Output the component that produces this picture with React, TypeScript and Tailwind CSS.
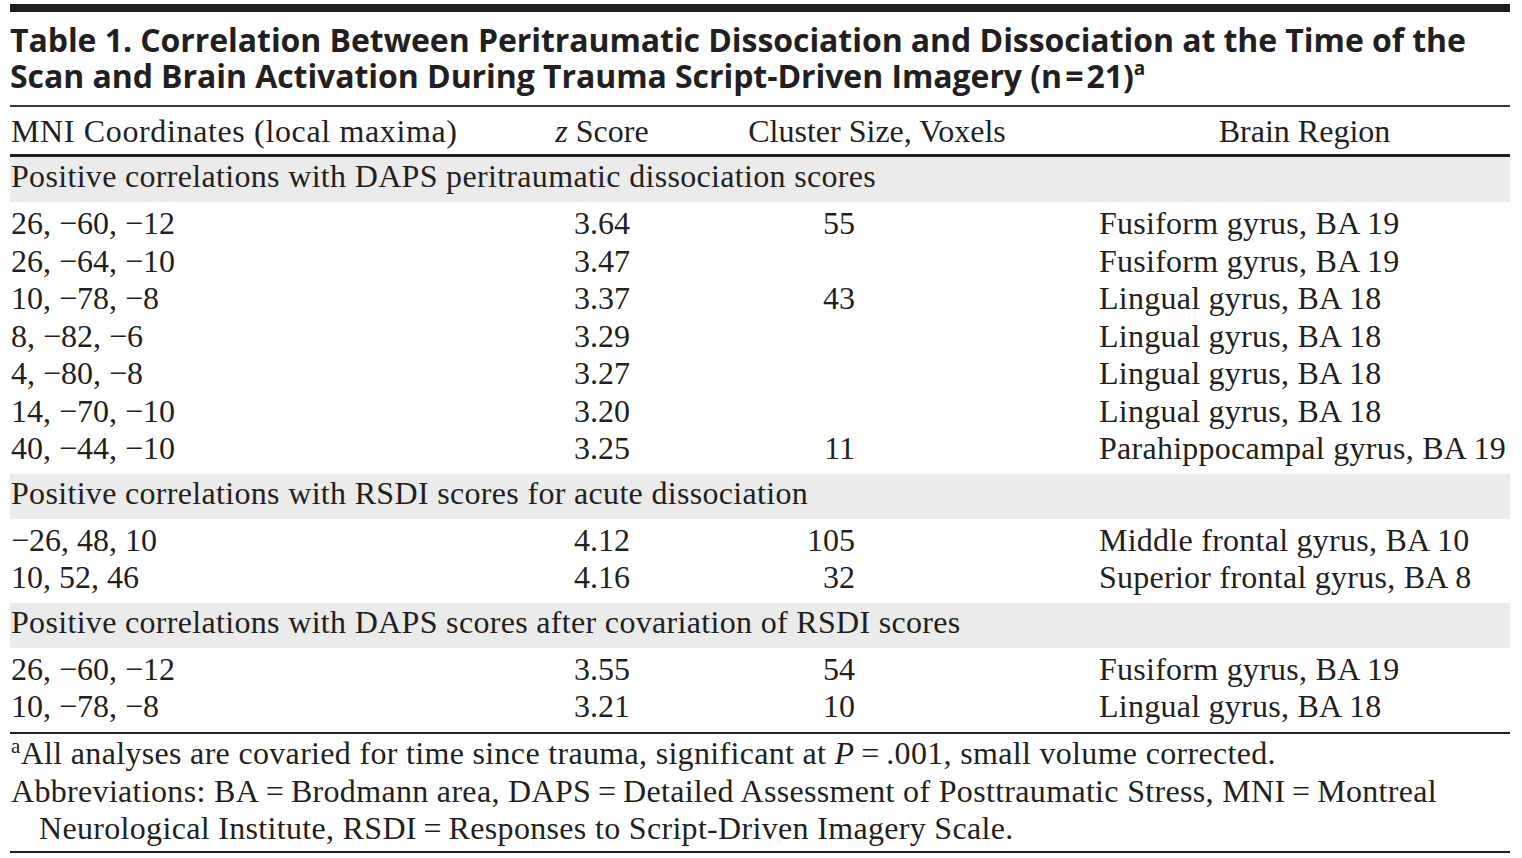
import React from "react";

const M = "\u2212";
const EQ = "\u2009=\u2009";

type Row = { coords: string; z: string; size?: string; region: string };
type Group = { label: string; rows: Row[] };

const groups: Group[] = [
  {
    label: "Positive correlations with DAPS peritraumatic dissociation scores",
    rows: [
      { coords: `26, ${M}60, ${M}12`, z: "3.64", size: "55", region: "Fusiform gyrus, BA 19" },
      { coords: `26, ${M}64, ${M}10`, z: "3.47", region: "Fusiform gyrus, BA 19" },
      { coords: `10, ${M}78, ${M}8`, z: "3.37", size: "43", region: "Lingual gyrus, BA 18" },
      { coords: `8, ${M}82, ${M}6`, z: "3.29", region: "Lingual gyrus, BA 18" },
      { coords: `4, ${M}80, ${M}8`, z: "3.27", region: "Lingual gyrus, BA 18" },
      { coords: `14, ${M}70, ${M}10`, z: "3.20", region: "Lingual gyrus, BA 18" },
      { coords: `40, ${M}44, ${M}10`, z: "3.25", size: "11", region: "Parahippocampal gyrus, BA 19" },
    ],
  },
  {
    label: "Positive correlations with RSDI scores for acute dissociation",
    rows: [
      { coords: `${M}26, 48, 10`, z: "4.12", size: "105", region: "Middle frontal gyrus, BA 10" },
      { coords: "10, 52, 46", z: "4.16", size: "32", region: "Superior frontal gyrus, BA 8" },
    ],
  },
  {
    label: "Positive correlations with DAPS scores after covariation of RSDI scores",
    rows: [
      { coords: `26, ${M}60, ${M}12`, z: "3.55", size: "54", region: "Fusiform gyrus, BA 19" },
      { coords: `10, ${M}78, ${M}8`, z: "3.21", size: "10", region: "Lingual gyrus, BA 18" },
    ],
  },
];

const abbreviations = `Abbreviations: BA${EQ}Brodmann area, DAPS${EQ}Detailed Assessment of Posttraumatic Stress, MNI${EQ}Montreal Neurological Institute, RSDI${EQ}Responses to Script-Driven Imagery Scale.`;

export default function App() {
  return (
    <div className="min-h-[858px] bg-white pt-[4px] text-[#231f20]">
      <div className="mx-[10px] w-[1500px]">
        {/* top bar */}
        <div className="h-[8px] bg-[#231f20]" />

        {/* title */}
        <h1 className="mt-[10px] whitespace-nowrap font-['Open_Sans',sans-serif] text-[32px] font-bold leading-[35.5px] tracking-[-0.002em]">
          <span className="block">
            Table 1. Correlation Between Peritraumatic Dissociation and Dissociation at the Time of the
          </span>
          <span className="block">
            {"Scan and Brain Activation During Trauma Script-Driven Imagery (n\u200a=\u200a21)"}
            <sup className="-top-[13px] text-[19px]">a</sup>
          </span>
        </h1>

        <div className="mt-[12px] h-[2px] bg-[#3a3a3a]" />

        {/* table */}
        <div className="font-['Liberation_Serif','Times_New_Roman',serif] text-[32px]">
          <div className="grid grid-cols-[490px_204px_346px_460px] pt-[6px] pb-[3.5px] leading-[37.5px]">
            <div className="pl-[1px] tracking-[0.02em]">MNI Coordinates (local maxima)</div>
            <div className="text-center">
              <i>z</i> Score
            </div>
            <div className="text-center">Cluster Size, Voxels</div>
            <div className="pl-[49px] text-center">Brain Region</div>
          </div>
          <div className="h-[3px] bg-[#231f20]" />

          {groups.map((g) => (
            <div key={g.label}>
              <div className="h-[45px] bg-[#ebebeb] pt-[2px] pl-[1px] leading-[35px] tracking-[0.01em]">
                {g.label}
              </div>
              <div className="pt-[3px] pb-[6px]">
                {g.rows.map((r, i) => (
                  <div key={i} className="grid grid-cols-[490px_204px_346px_460px] leading-[37.5px]">
                    <div className="pl-[1px]">{r.coords}</div>
                    <div className="text-center">{r.z}</div>
                    <div className="pr-[195px] text-right">{r.size ?? ""}</div>
                    <div className="whitespace-nowrap pl-[49px] tracking-[0.008em]">{r.region}</div>
                  </div>
                ))}
              </div>
            </div>
          ))}

          <div className="h-[2px] bg-[#231f20]" />

          {/* footnotes */}
          <div className="pt-[1.5px] leading-[37.5px] tracking-[0.01em]">
            <p className="pl-[1px]">
              <sup className="-top-[11px] text-[21px]">a</sup>
              {"All analyses are covaried for time since trauma, significant at "}
              <i>P</i>
              {`${EQ}.001, small volume corrected.`}
            </p>
            <p className="pl-[29px] -indent-[28px]">{abbreviations}</p>
          </div>
          <div className="mt-[3.5px] h-[2px] bg-[#231f20]" />
        </div>
      </div>
    </div>
  );
}
